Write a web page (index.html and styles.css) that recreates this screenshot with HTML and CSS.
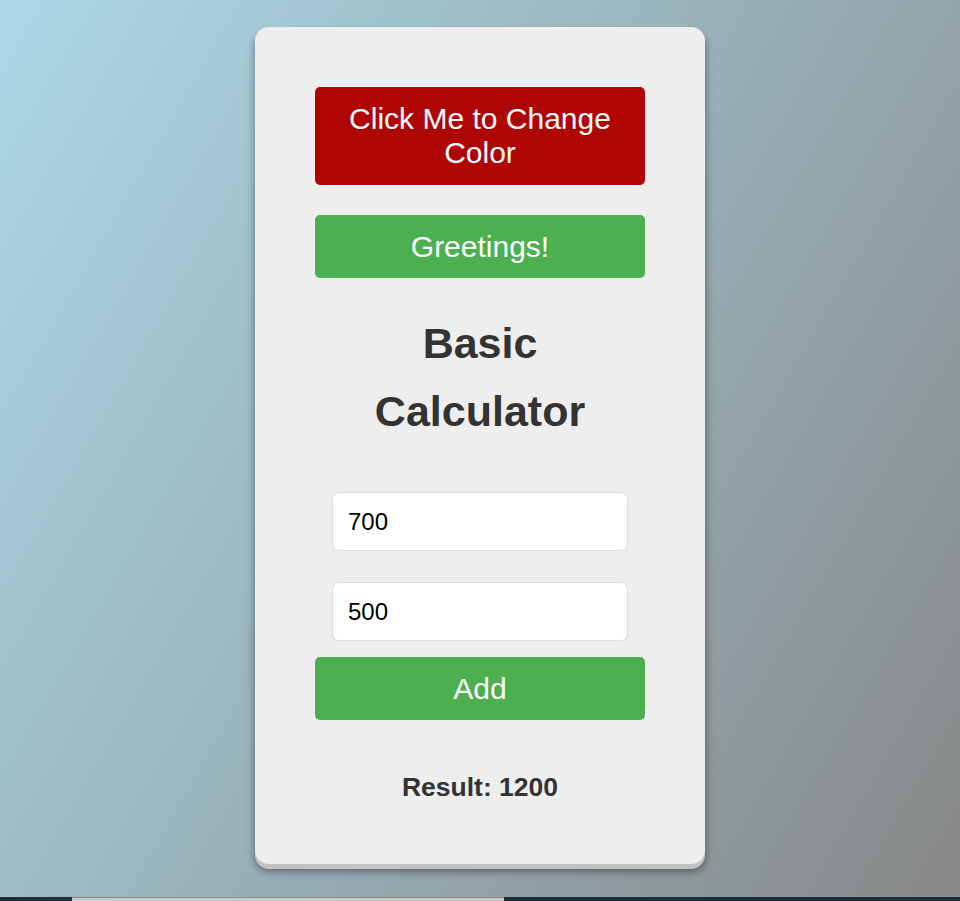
FILE: index.html
```html
<!DOCTYPE html>
<html lang="en">
<head>
<meta charset="utf-8">
<title>Basic Calculator</title>
<link rel="stylesheet" href="styles.css">
</head>
<body>
<main class="page">
  <section class="card">
    <button class="btn btn-red">Click Me to Change Color</button>
    <button class="btn btn-green btn-greet">Greetings!</button>
    <h1 class="title">Basic Calculator</h1>
    <input class="field" type="text" value="700">
    <input class="field field-second" type="text" value="500">
    <button class="btn btn-green btn-add">Add</button>
    <p class="result">Result: 1200</p>
  </section>
</main>
<div class="strip"><div class="strip-bar"></div></div>
</body>
</html>
```
FILE: styles.css
```css
html, body {
  margin: 0;
  padding: 0;
}
body {
  font-family: "Liberation Sans", Arial, sans-serif;
  background: linear-gradient(120deg, #add8e6 0%, #98b0b8 50%, #888888 100%);
  min-height: 901px;
  overflow: hidden;
}
.page {
  display: flex;
  justify-content: center;
  padding-top: 27px;
  height: 870px;
}
.card {
  box-sizing: border-box;
  width: 450px;
  height: 837px;
  background: #eeeeee;
  border-radius: 14px;
  padding: 60px 60px 0;
  display: flex;
  flex-direction: column;
  align-items: center;
  box-shadow: 0 5px 0 #c2c2c2, 0 7px 8px rgba(0, 0, 0, 0.45);
}
.btn {
  width: 330px;
  border: none;
  border-radius: 5px;
  color: #ffffff;
  font-family: "Liberation Sans", Arial, sans-serif;
  font-size: 30px;
  line-height: 34px;
  padding: 14.5px 10px;
  margin: 0;
}
.btn-red {
  background: #b00505;
  padding: 15px 10px;
}
.btn-green {
  background: #4caf50;
}
.btn-greet {
  margin-top: 30px;
}
.title {
  margin: 31px 0 47px;
  font-size: 43px;
  line-height: 68px;
  font-weight: bold;
  color: #333333;
  text-align: center;
}
.field {
  box-sizing: border-box;
  width: 296px;
  height: 59px;
  padding: 0 15px;
  border: 1px solid #dddddd;
  border-radius: 7px;
  background: #ffffff;
  font-family: "Liberation Sans", Arial, sans-serif;
  font-size: 24px;
  color: #000000;
  margin: 0;
}
.field-second {
  margin-top: 31px;
}
.btn-add {
  margin-top: 16px;
}
.result {
  margin: 52px 0 0;
  font-size: 26.5px;
  font-weight: bold;
  color: #333333;
}
.strip {
  height: 4px;
  background: #1d2f36;
  display: flex;
}
.strip-bar {
  margin-left: 72px;
  width: 432px;
  background: #c9c9c9;
  border-top: 1px solid #8a8a8a;
}
```
